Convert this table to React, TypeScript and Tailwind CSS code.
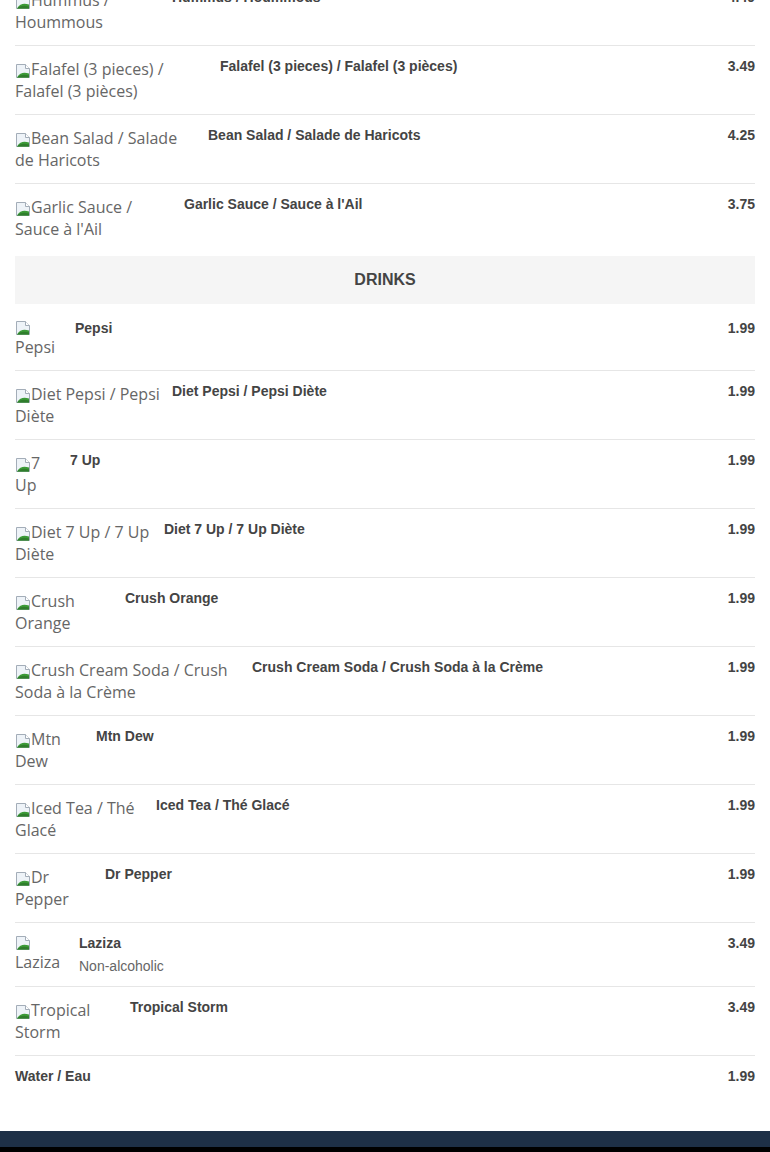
import React from "react";

type Item = {
  alt?: [string, string];
  name: string;
  price: string;
  nameX?: number;
  desc?: string;
  last?: boolean;
};

const BrokenIcon = ({ block }: { block?: boolean }) => (
  <svg
    width="16"
    height="16"
    viewBox="0 0 16 16"
    className={block ? "block" : "inline-block"}
  >
    <path d="M1.5 1.5h9l4 4v9h-13z" fill="#eef3f8" stroke="#a3adb8" />
    <path d="M10.5 1.5v4h4" fill="#ffffff" stroke="#a3adb8" />
    <path d="M2 14.5C5 9.5 9 9 14 10.5V14.5z" fill="#3c9a38" />
    <path d="M2 14.5C5 11.5 9 11 14 12.5V14.5z" fill="#2f7d2c" />
  </svg>
);

const Row = ({ item }: { item: Item }) => {
  const x = item.nameX ?? 15;
  const altW = x - 15 - 20;
  return (
    <div
      className={
        "flex items-start py-3 " +
        (item.last ? "" : "border-b border-[#e6e6e6]")
      }
    >
      {item.alt && (
        <div
          className="shrink-0 mr-5 text-[16px] leading-[22px] text-[#666] whitespace-nowrap"
          style={{ width: altW, fontFamily: '"Open Sans", sans-serif' }}
        >
          {item.alt[0] === "" ? (
            <div className="h-4">
              <BrokenIcon block />
            </div>
          ) : (
            <div>
              <BrokenIcon />
              {item.alt[0]}
            </div>
          )}
          <div>{item.alt[1]}</div>
        </div>
      )}
      <div className="flex-1">
        <div className="text-[14px] leading-4 font-bold text-[#444]">
          {item.name}
        </div>
        {item.desc && (
          <div className="mt-[7px] text-[14px] leading-4 text-[#666]">
            {item.desc}
          </div>
        )}
      </div>
      <div className="text-[14px] leading-4 font-bold text-[#444] text-right">
        {item.price}
      </div>
    </div>
  );
};

const mains: Item[] = [
  { alt: ["Hummus /", "Hoummous"], name: "Hummus / Hoummous", price: "4.49", nameX: 172 },
  { alt: ["Falafel (3 pieces) /", "Falafel (3 pièces)"], name: "Falafel (3 pieces) / Falafel (3 pièces)", price: "3.49", nameX: 220 },
  { alt: ["Bean Salad / Salade", "de Haricots"], name: "Bean Salad / Salade de Haricots", price: "4.25", nameX: 208 },
  { alt: ["Garlic Sauce /", "Sauce à l'Ail"], name: "Garlic Sauce / Sauce à l'Ail", price: "3.75", nameX: 184, last: true },
];

const drinks: Item[] = [
  { alt: ["", "Pepsi"], name: "Pepsi", price: "1.99", nameX: 75 },
  { alt: ["Diet Pepsi / Pepsi", "Diète"], name: "Diet Pepsi / Pepsi Diète", price: "1.99", nameX: 172 },
  { alt: ["7", "Up"], name: "7 Up", price: "1.99", nameX: 70 },
  { alt: ["Diet 7 Up / 7 Up", "Diète"], name: "Diet 7 Up / 7 Up Diète", price: "1.99", nameX: 164 },
  { alt: ["Crush", "Orange"], name: "Crush Orange", price: "1.99", nameX: 125 },
  { alt: ["Crush Cream Soda / Crush", "Soda à la Crème"], name: "Crush Cream Soda / Crush Soda à la Crème", price: "1.99", nameX: 252 },
  { alt: ["Mtn", "Dew"], name: "Mtn Dew", price: "1.99", nameX: 96 },
  { alt: ["Iced Tea / Thé", "Glacé"], name: "Iced Tea / Thé Glacé", price: "1.99", nameX: 156 },
  { alt: ["Dr", "Pepper"], name: "Dr Pepper", price: "1.99", nameX: 105 },
  { alt: ["", "Laziza"], name: "Laziza", desc: "Non-alcoholic", price: "3.49", nameX: 79 },
  { alt: ["Tropical", "Storm"], name: "Tropical Storm", price: "3.49", nameX: 130 },
  { name: "Water / Eau", price: "1.99", last: true },
];

export default function App() {
  return (
    <div
      className="w-full bg-white overflow-hidden"
      style={{ fontFamily: '"Liberation Sans", Arial, sans-serif' }}
    >
      <div className="px-[15px] mt-[-23px] pb-[35px]">
        {mains.map((it, i) => (
          <Row key={i} item={it} />
        ))}
        <div className="my-1 h-12 bg-[#f5f5f5] flex items-center justify-center text-[16px] font-bold text-[#444]">
          DRINKS
        </div>
        {drinks.map((it, i) => (
          <Row key={i} item={it} />
        ))}
      </div>
      <div className="h-4 bg-[#1e3047]" />
      <div className="h-10 bg-black" />
    </div>
  );
}
